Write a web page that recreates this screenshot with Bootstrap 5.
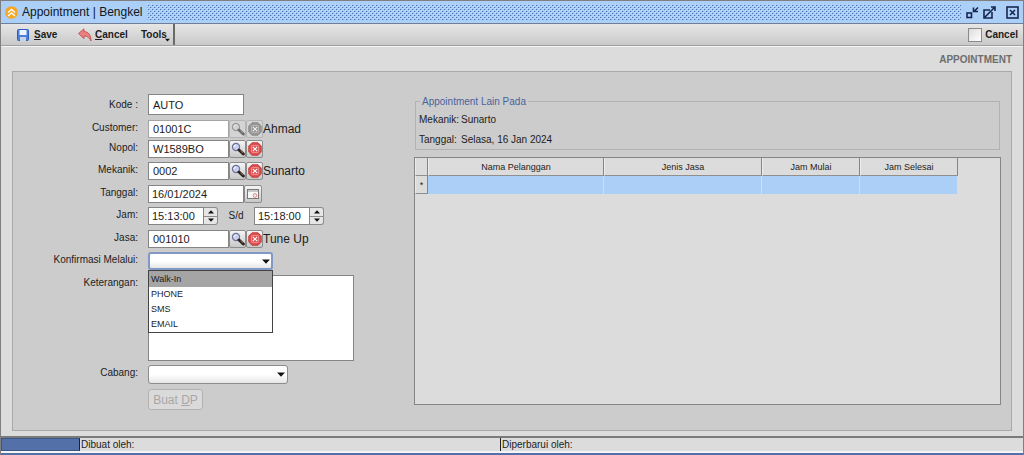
<!DOCTYPE html>
<html lang="id">
<head>
<meta charset="utf-8">
<meta name="viewport" content="width=device-width, initial-scale=1">
<title>Appointment | Bengkel</title>
<link href="https://cdn.jsdelivr.net/npm/bootstrap@5.3.0/dist/css/bootstrap.min.css" rel="stylesheet">
<style>
  body { font-family: "Liberation Sans", Arial, sans-serif; font-size: 10px; line-height: 12px; color: #1c1c1c; background: #dcdcdc; }
  .win { border: solid #7f7f7f; border-width: 1px 1px 0; }
  .titlebar { height: 23px; background: #abcff7; border-bottom: 1px solid #6f7f9a; font-size: 12px; color: #101820; }
  .bumps { height: 16px; background: url("data:image/svg+xml,%3Csvg xmlns='http://www.w3.org/2000/svg' width='4' height='4' shape-rendering='crispEdges'%3E%3Cpath d='M0 0h1v1H0zM2 2h1v1H2z' fill='%23c4defc'/%3E%3Cpath d='M1 1h1v1H1zM3 3h1v1H3z' fill='%234a70b0'/%3E%3Cpath d='M2 1h1v1H2zM0 3h1v1H0z' fill='%238fb4e4'/%3E%3C/svg%3E"); margin: 0 5px 0 4px; }
  .tb-btn { border: 0; background: none; padding: 0; color: inherit; line-height: 14px; display: flex; align-items: center; }
  .tb-close { margin: 0 4px 0 10px; }
  .toolbar { height: 22px; background: linear-gradient(#e6e6e6, #c9c9c9); border-bottom: 1px solid #a0a0a0; font-weight: bold; }
  .toolbar .tb-btn { font-weight: bold; }
  .tb-save { width: 61px; gap: 5px; margin-left: 16px; }
  .tb-cancel { width: 63px; gap: 3px; }
  .tb-tools { width: 32px; position: relative; }
  .tb-tools svg { position: absolute; right: 3px; bottom: 0; }
  .toolbar-sep { width: 2px; background: #6a6a6a; }
  .check-cancel { margin-right: 5px; }
  .check-box { appearance: none; width: 14px; height: 14px; margin: 0 3px 0 0; border: 1px solid #8a8a8a; background: linear-gradient(135deg, #dcdcdc, #fff); }
  .desk { padding: 7px 11px 5px; border-top: 1px solid #f4f4f4; }
  .page-title { font-size: 10px; line-height: 12px; font-weight: bold; color: #6e6e6e; margin: 0 0 5px; }
  .panel { background: #ccc; border: 1px solid #a9a9a9; }
  .form-col { width: 401px; padding: 22px 0 0; }
  .line { display: flex; align-items: flex-start; margin-bottom: 4px; }
  .line-5 { margin-bottom: 5px; }
  .line-2 { margin-bottom: 2px; }
  .line > .cap { width: 125px; margin-right: 10px; text-align: right; line-height: 16px; }
  .line > .cap-tall { padding-top: 3px; }
  .until { width: 36px; line-height: 18px; text-align: center; }
  .field { height: 18px; border: 1px solid #858585; border-radius: 0; background: #fff; color: #1c1c1c; padding: 0 4px; font-size: 11px; line-height: 16px; }
  .field-kode { width: 96px; height: 21px; }
  .field-code { width: 81px; }
  .field-date { width: 96px; padding: 0 3px; }
  .field-time { width: 56px; padding: 0 3px; }
  .soft { border-color: #a5a5a5; }
  .sq { width: 17px; height: 18px; padding: 0; border: 1px solid #8c8c8c; border-radius: 2px; background: linear-gradient(#f4f4f4, #c8c8c8); display: flex; align-items: center; justify-content: center; }
  .sq:disabled { border-color: #b5b5b5; background: #d4d4d4; }
  .sq:disabled svg { filter: grayscale(1); opacity: .6; }
  .sq-date { width: 18px; }
  .spin { width: 14px; height: 18px; border: 1px solid #8c8c8c; border-left: 0; border-radius: 0 3px 3px 0; background: #e6e6e6; display: flex; flex-direction: column; }
  .spin button { flex: 1; border: 0; padding: 0; background: none; display: flex; align-items: center; justify-content: center; }
  .spin button + button { border-top: 1px solid #8c8c8c; }
  .name { font-size: 12px; line-height: 18px; }
  .combo { height: 18px; border: 1px solid #8c8c8c; border-radius: 3px; appearance: none; background: linear-gradient(#fff 50%, #e6e6e6); }
  .combo-wrap { position: relative; }
  .combo-wrap > .arrow { position: absolute; right: 3px; top: 7px; pointer-events: none; }
  .combo-konf { width: 125px; border: 2px solid #8298c4; }
  .combo-cab { width: 140px; height: 19px; }
  .pop { position: absolute; top: 100%; left: 0; width: 125px; margin: 0; padding: 0; border: 1px solid #444; background: #fff; list-style: none; z-index: 5; font-size: 9px; line-height: 15px; }
  .pop li { padding: 0 2px; height: 15px; }
  .pop .picked { background: #a5a5a5; height: 16px; line-height: 17px; }
  .notes { width: 206px; height: 86px; resize: none; }
  .btn-dp { height: 21px; width: 55px; padding: 0; font-size: 12px; line-height: 18px; color: #a8a8a8; background: #dadada; border: 1px solid #b3b3b3; border-radius: 3px; }
  .other { border: 1px solid #b2b2b2; padding: 12px 3px 0; height: 49px; margin: 29px 1px 7px; position: relative; }
  .other legend { position: absolute; top: -6px; left: 4px; width: auto; float: none; margin: 0; padding: 0 2px; background: #ccc; color: #4a639c; font-size: 10px; line-height: 12px; }
  .other dt { width: 42px; font-weight: normal; }
  .other dd { margin: 0; }
  .other dl { margin: 0 0 8px; display: flex; }
  .side { margin-right: 10px; }
  .grid-box { border: 1px solid #858585; background: #dcdcdc; margin-bottom: 25px; }
  .grid-tbl { table-layout: fixed; width: 543px; border-collapse: separate; border-spacing: 0; font-size: 9px; }
  .grid-tbl th { height: 18px; padding: 0; font-weight: normal; text-align: center; border-right: 1px solid #858585; border-bottom: 1px solid #8f8f8f; border-left: 1px solid #ececec; }
  .grid-tbl td { height: 18px; padding: 0; background: #abcff7; border-right: 1px solid #d5dde6; }
  .status { height: 15px; border-top: 2px solid #7a7a7a; background: #dcdcdc; }
  .status-chip { width: 79px; background: #5470a8; border: 1px solid #3d5688; border-right-color: #222; }
  .status-cell { width: 420px; padding-left: 1px; line-height: 14px; }
  .status-cell + .status-cell { border-left: 1px solid #222; }
  .base { height: 4px; background: #5470a8; border-top: 2px solid #f4f4f4; }
</style>
</head>
<body>
<svg width="0" height="0" class="d-none" aria-hidden="true">
  <symbol id="i-find" viewBox="0 0 14 14"><circle cx="5" cy="5" r="3.600" fill="#c9cff0" stroke="#6d7396" stroke-width="1.200"/><path d="M3 5a2 2 0 0 1 2-2" fill="none" stroke="#fff"/><path d="M8 8l4.300 4" stroke="#2b2320" stroke-width="3" stroke-linecap="round"/><path d="M9.500 8.800l2.500 2.300" stroke="#96714e"/></symbol>
  <symbol id="i-stop" viewBox="0 0 14 14"><path d="M4 .8h6L13.200 4v6L10 13.200H4L.8 10V4z" fill="#e04f4f" stroke="#c23e3e" stroke-linejoin="round"/><rect x="3.500" y="3.500" width="7" height="7" rx="1" fill="none" stroke="#f0a0a0" stroke-width=".8"/><path d="M4.800 4.800l4.400 4.400M9.200 4.800L4.800 9.200" stroke="#fff" stroke-width="1.200"/></symbol>
  <symbol id="i-down" viewBox="0 0 8 5"><path d="M0 .5h8L4 4.800z" fill="#111"/></symbol>
  <symbol id="i-up" viewBox="0 0 8 5"><path d="M0 4.500h8L4 .2z" fill="#111"/></symbol>
</svg>
<div class="win d-flex flex-column min-vh-100">
  <header class="titlebar d-flex align-items-center flex-shrink-0">
    <svg class="ms-1" width="13" height="13" viewBox="0 0 13 13"><path d="M4 .5h5l3.500 3v6l-3.500 3H4L.5 9.500v-6z" fill="#f5a623"/><path d="M3 6.500l3.500-3 3.500 3M3 10l3.500-3 3.500 3" fill="none" stroke="#fff" stroke-width="1.400"/></svg>
    <span class="ms-1">Appointment | Bengkel</span>
    <div class="bumps flex-grow-1"></div>
    <button class="tb-btn" aria-label="Minimize"><svg width="13" height="13" viewBox="0 0 13 13"><g fill="none" stroke="#17264f" stroke-width="1.600"><rect x="1" y="7" width="4.500" height="4.500"/><path d="M12 1.500L8.500 5M7.500 1.500v4H12"/></g></svg></button>
    <button class="tb-btn ms-1" aria-label="Maximize"><svg width="13" height="13" viewBox="0 0 13 13"><g fill="none" stroke="#17264f" stroke-width="1.600"><path d="M7 4H1v8h8V6M2 11l10-10M8 1h4v4"/></g></svg></button>
    <button class="tb-btn tb-close" aria-label="Close"><svg width="13" height="13" viewBox="0 0 13 13"><g fill="none" stroke="#17264f" stroke-width="1.600"><rect x="1" y="1" width="11" height="11"/><path d="M4 4l5 5M9 4l-5 5"/></g></svg></button>
  </header>
  <nav class="toolbar d-flex align-items-center flex-shrink-0">
    <button class="tb-btn tb-save"><svg width="12" height="12" viewBox="0 0 12 12"><rect x=".5" y=".5" width="11" height="11" rx="1" fill="#4a7fdc" stroke="#2e5fb8"/><rect x="2.500" y="1" width="7" height="5" fill="#eef4ff"/><rect x="3" y="8" width="6" height="4" fill="#c9d3e6"/></svg><span><u>S</u>ave</span></button>
    <button class="tb-btn tb-cancel"><svg width="14" height="14" viewBox="0 0 14 14"><path d="M.5 5.500L6 .8v2.700c4.500.2 7 3.500 7 9.500-1.500-3.200-3.500-5-7-5v2.700z" fill="#e88080" stroke="#c04848" stroke-width=".8"/></svg><span><u>C</u>ancel</span></button>
    <button class="tb-btn tb-tools">Tools<svg width="5" height="4"><use href="#i-down"/></svg></button>
    <div class="toolbar-sep align-self-stretch"></div>
    <label class="check-cancel d-flex align-items-center ms-auto"><input type="checkbox" class="check-box">Cancel</label>
  </nav>
  <main class="desk d-flex flex-column flex-grow-1">
    <h1 class="page-title text-end">APPOINTMENT</h1>
    <div class="panel d-flex flex-grow-1">
      <form class="form-col flex-shrink-0">
        <div class="line line-5"><label class="cap cap-tall" for="kode">Kode :</label><input id="kode" class="field field-kode" value="AUTO"></div>
        <div class="line line-2"><label class="cap" for="cust">Customer:</label><input id="cust" class="field field-code soft" value="01001C"><button type="button" class="sq" disabled aria-label="Cari"><svg width="14" height="14"><use href="#i-find"/></svg></button><button type="button" class="sq" disabled aria-label="Hapus"><svg width="14" height="14"><use href="#i-stop"/></svg></button><span class="name">Ahmad</span></div>
        <div class="line"><label class="cap" for="nopol">Nopol:</label><input id="nopol" class="field field-code" value="W1589BO"><button type="button" class="sq" aria-label="Cari"><svg width="14" height="14"><use href="#i-find"/></svg></button><button type="button" class="sq" aria-label="Hapus"><svg width="14" height="14"><use href="#i-stop"/></svg></button></div>
        <div class="line line-5"><label class="cap" for="mek">Mekanik:</label><input id="mek" class="field field-code" value="0002"><button type="button" class="sq" aria-label="Cari"><svg width="14" height="14"><use href="#i-find"/></svg></button><button type="button" class="sq" aria-label="Hapus"><svg width="14" height="14"><use href="#i-stop"/></svg></button><span class="name">Sunarto</span></div>
        <div class="line"><label class="cap" for="tgl">Tanggal:</label><input id="tgl" class="field field-date" value="16/01/2024"><button type="button" class="sq sq-date" aria-label="Kalender"><svg width="12" height="11" viewBox="0 0 12 11"><rect x=".5" y=".5" width="11" height="9" fill="#f6f6f6" stroke="#777"/><path d="M1 2h10" stroke="#999"/><circle cx="8" cy="6.500" r="1.800" fill="none" stroke="#e08080"/></svg></button></div>
        <div class="line line-5"><label class="cap" for="jam1">Jam:</label><input id="jam1" class="field field-time" value="15:13:00"><div class="spin"><button type="button" aria-label="Naik"><svg width="6" height="4"><use href="#i-up"/></svg></button><button type="button" aria-label="Turun"><svg width="6" height="4"><use href="#i-down"/></svg></button></div>
          <label class="until" for="jam2">S/d</label><input id="jam2" class="field field-time" value="15:18:00"><div class="spin"><button type="button" aria-label="Naik"><svg width="6" height="4"><use href="#i-up"/></svg></button><button type="button" aria-label="Turun"><svg width="6" height="4"><use href="#i-down"/></svg></button></div></div>
        <div class="line"><label class="cap" for="jasa">Jasa:</label><input id="jasa" class="field field-code" value="001010"><button type="button" class="sq" aria-label="Cari"><svg width="14" height="14"><use href="#i-find"/></svg></button><button type="button" class="sq" aria-label="Hapus"><svg width="14" height="14"><use href="#i-stop"/></svg></button><span class="name">Tune Up</span></div>
        <div class="line line-5"><label class="cap" for="konf">Konfirmasi Melalui:</label><div class="combo-wrap d-flex"><select id="konf" class="combo combo-konf"><option></option></select><svg class="arrow" width="8" height="5"><use href="#i-down"/></svg>
          <ul class="pop"><li class="picked">Walk-In</li><li>PHONE</li><li>SMS</li><li>EMAIL</li></ul></div></div>
        <div class="line"><label class="cap" for="ket">Keterangan:</label><textarea id="ket" class="field notes"></textarea></div>
        <div class="line line-5"><label class="cap" for="cab">Cabang:</label><div class="combo-wrap d-flex"><select id="cab" class="combo combo-cab"><option></option></select><svg class="arrow" width="8" height="5"><use href="#i-down"/></svg></div></div>
        <div class="line"><span class="cap"></span><button type="button" class="btn-dp" disabled>Buat <u>D</u>P</button></div>
      </form>
      <section class="side d-flex flex-column flex-grow-1">
        <fieldset class="other"><legend>Appointment Lain Pada</legend>
          <dl><dt>Mekanik:</dt><dd>Sunarto</dd></dl>
          <dl><dt>Tanggal:</dt><dd>Selasa, 16 Jan 2024</dd></dl>
        </fieldset>
        <div class="grid-box flex-grow-1">
          <table class="grid-tbl"><colgroup><col style="width:13px"><col style="width:176px"><col style="width:158px"><col style="width:98px"><col style="width:98px"></colgroup>
            <thead><tr><th></th><th>Nama Pelanggan</th><th>Jenis Jasa</th><th>Jam Mulai</th><th>Jam Selesai</th></tr></thead>
            <tbody><tr><th>*</th><td></td><td></td><td></td><td></td></tr></tbody></table>
        </div>
      </section>
    </div>
  </main>
  <footer class="status d-flex flex-shrink-0"><div class="status-chip"></div><div class="status-cell">Dibuat oleh:</div><div class="status-cell">Diperbarui oleh:</div></footer>
  <div class="base flex-shrink-0"></div>
</div>
<script src="https://cdn.jsdelivr.net/npm/bootstrap@5.3.0/dist/js/bootstrap.bundle.min.js"></script>
</body>
</html>
